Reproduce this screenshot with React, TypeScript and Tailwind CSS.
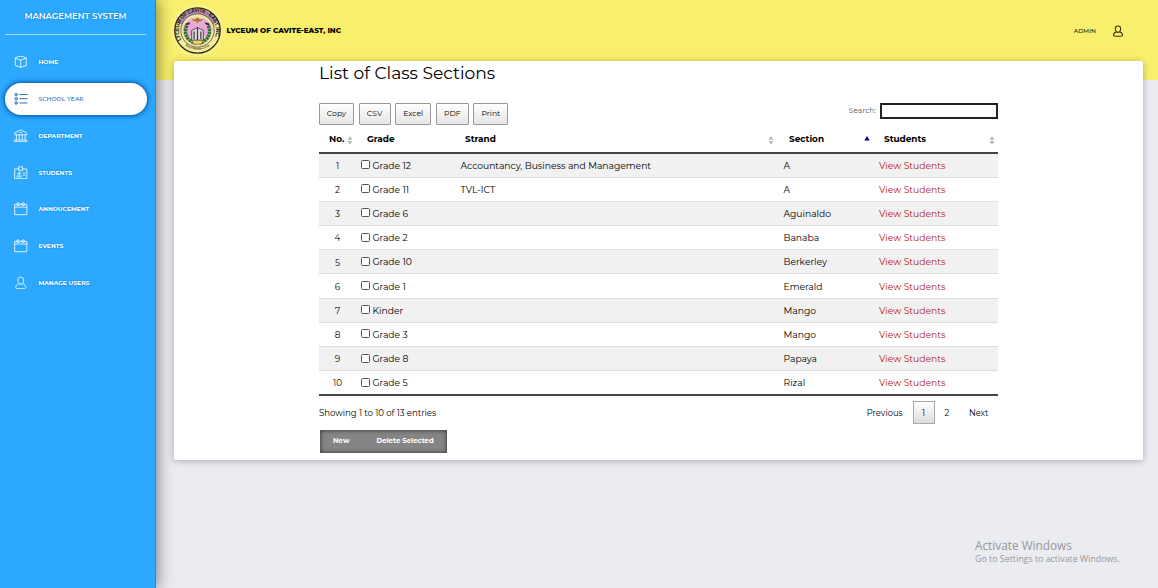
import React from "react";

type IconName = "box" | "list" | "bank" | "badge" | "calendar" | "user";

function NavIcon({ name, className }: { name: IconName; className?: string }) {
  return (
    <svg viewBox="0 0 16 16" fill="none" stroke="currentColor" strokeWidth="1.15" strokeLinejoin="round" strokeLinecap="round" className={className}>
      {name === "box" && <path d="M1.500 3.800 8 6 14.500 3.800M8 6V14.500M1.500 3.800V12.500L8 14.500 14.500 12.500V3.800L11 2 8 1.500 5 2Z" />}
      {name === "list" && (
        <>
          <path d="M7 3H15.500M7 8H15.500M7 13H15.500" />
          <circle cx="2.500" cy="3" r="1.500" /><circle cx="2.500" cy="8" r="1.500" /><circle cx="2.500" cy="13" r="1.500" />
        </>
      )}
      {name === "bank" && <path d="M1 6.500V4.500L8 1 15 4.500V6.500ZM2.800 6.500V13M6.200 6.500V13M9.800 6.500V13M13.200 6.500V13M1 13H15V15H1ZM7 4.200H9" />}
      {name === "badge" && (
        <>
          <path d="M6 3.500H.8V15H15.200V3.500H10M6 1H10V5.500H6ZM11 8.500H13M11 11H13M3.500 12.500C3.500 10.800 4.500 10.500 6 10.500S8.500 10.800 8.500 12.500Z" />
          <circle cx="6" cy="8.600" r="1.200" />
        </>
      )}
      {name === "calendar" && <path d="M4 2.800H.8V15H15.200V2.800H12M6 2.800H10M.8 6H15.200M4 1.200H6V4H4ZM10 1.200H12V4H10Z" />}
      {name === "user" && (
        <>
          <path d="M5.800 9.300C3.200 9.800 2 11.500 2 13.500C2 14.500 3 15 8 15S14 14.500 14 13.500C14 11.500 12.800 9.800 10.200 9.300" />
          <path d="M8 9.800C6 9.800 4.500 7.500 4.500 4.700A3.500 3.500 0 0 1 11.500 4.700C11.500 7.500 10 9.800 8 9.800Z" />
        </>
      )}
    </svg>
  );
}

const navItems: { label: string; icon: IconName; active?: boolean }[] = [
  { label: "HOME", icon: "box" },
  { label: "SCHOOL YEAR", icon: "list", active: true },
  { label: "DEPARTMENT", icon: "bank" },
  { label: "STUDENTS", icon: "badge" },
  { label: "ANNOUCEMENT", icon: "calendar" },
  { label: "EVENTS", icon: "calendar" },
  { label: "MANAGE USERS", icon: "user" },
];

const rows = [
  ["Grade 12", "Accountancy, Business and Management", "A"],
  ["Grade 11", "TVL-ICT", "A"],
  ["Grade 6", "", "Aguinaldo"],
  ["Grade 2", "", "Banaba"],
  ["Grade 10", "", "Berkerley"],
  ["Grade 1", "", "Emerald"],
  ["Kinder", "", "Mango"],
  ["Grade 3", "", "Mango"],
  ["Grade 8", "", "Papaya"],
  ["Grade 5", "", "Rizal"],
];

const exportButtons = [
  { label: "Copy", width: "w-[35px]" },
  { label: "CSV", width: "w-[32px]" },
  { label: "Excel", width: "w-[36px]" },
  { label: "PDF", width: "w-[33px]" },
  { label: "Print", width: "w-[35px]" },
];

function SortIcon({ sorted = false }: { sorted?: boolean }) {
  return (
    <svg viewBox="0 0 6 10" className="relative top-px h-[10px] w-[6px] shrink-0">
      {sorted ? <path d="M3 1 5.700 5.500H.3Z" fill="#000080" /> : <path d="M3 1 5.300 4.700H.7ZM3 9.800 5.300 6H.7Z" fill="#b5b5b5" />}
    </svg>
  );
}

function Seal() {
  return (
    <svg viewBox="0 0 48 48" className="size-[47px] shrink-0">
      <defs>
        <path id="seal-top" d="M7.500 33.500A19 19 0 1 1 40.500 33.500" />
        <path id="seal-bottom" d="M10.500 38.500A20.300 20.300 0 0 0 37.500 38.500" />
      </defs>
      <circle cx="24" cy="24" r="23.200" fill="#f4ec9c" stroke="#29271a" strokeWidth="1.300" />
      <path d="M3.500 15A22.500 22.500 0 0 1 44.500 15L39 19A17 17 0 0 0 9 19Z" fill="#b58cb0" />
      <circle cx="24" cy="24" r="17" fill="#f0e9a8" stroke="#39312b" strokeWidth=".7" />
      <path d="M9 22A15.500 15.500 0 0 1 39 22L35 30H13Z" fill="#eaa8d6" />
      <text fontSize="5.400" fontWeight="700" fill="#1c1518" fontFamily="Liberation Sans, sans-serif"><textPath href="#seal-top" textLength="76">LYCEUM OF CAVITE - EAST, INC.</textPath></text>
      <text fontSize="3.200" fontWeight="700" fill="#292513" fontFamily="Liberation Serif, serif"><textPath href="#seal-bottom" startOffset="1">Trece Martires City</textPath></text>
      <path d="M16.500 11 21 12.500 24 10.500 27 12.500 31.500 11 28 15 25.500 15 24 18 22.500 15 20 15Z" fill="#b06c34" stroke="#f8e2c0" strokeWidth=".7" />
      <path d="M13 19C9.500 27 13 34 22 37M35 19C38.500 27 35 34 26 37" fill="none" stroke="#35703c" strokeWidth="3.600" strokeDasharray="2.500 .6" />
      <path d="M12 18 16 16.500M36 18 32 16.500" stroke="#302a25" strokeWidth="2" />
      <path d="M18 24 24 21 30 24V34H18Z" fill="#ded9df" stroke="#353136" strokeWidth=".8" />
      <path d="M24 21V34M20.500 25V33M27.500 25V33" stroke="#39353a" strokeWidth="1.200" />
      <path d="M18 34H30L28 38H20Z" fill="#ead574" stroke="#64552c" strokeWidth=".7" />
    </svg>
  );
}

export default function App() {
  return (
    <div className="flex h-[588px] w-[1158px] overflow-hidden bg-[#ebecf1] font-['Montserrat','Inter',sans-serif] text-black">
      <aside className="relative z-10 w-[156px] shrink-0 border-r border-[#188ddd] bg-[#2ca8ff] text-white shadow-[2px_0_14px_rgba(0,0,0,0.45)]">
        <h1 className="ml-[5px] flex h-[35px] w-[141px] items-center justify-center border-b border-[#a6dafb] pb-[1.500px] text-[8.450px] font-semibold [text-shadow:0_0_2px_#0876c4]">MANAGEMENT SYSTEM</h1>
        <nav className="ml-[5px] mt-[11px] flex w-[142px] flex-col gap-[5px]">
          {navItems.map((item) => (
            <a key={item.label} href="#" className={`flex h-[31.800px] items-center rounded-full pl-[9px] ${item.active ? "bg-white text-[#2168b8] shadow-[0_0_5px_1px_#00529f]" : "text-white"}`}>
              <NavIcon name={item.icon} className={`size-[13.500px] shrink-0 ${item.active ? "" : "opacity-85"}`} />
              <span className={`ml-[11px] whitespace-nowrap pt-[0.500px] text-[6px] leading-[8px] ${item.active ? "font-medium tracking-[0.05px]" : "font-bold [text-shadow:0_0_2px_#087bcb]"}`}>{item.label}</span>
            </a>
          ))}
        </nav>
      </aside>

      <div className="relative flex min-w-0 grow flex-col bg-[linear-gradient(#f8ef6d_0_80px,#ebecf1_80px)]">
        <header className="flex h-[61px] shrink-0 items-center pl-[18px] pr-[34px]">
          <div className="rounded-full shadow-[0_0_5px_#fffbc0]"><Seal /></div>
          <span className="ml-[5.500px] pt-[1.500px] text-[7.250px] font-extrabold">LYCEUM OF CAVITE-EAST, INC</span>
          <span className="ml-auto pt-[1.500px] text-[6.100px] font-medium text-[#302d0d]">ADMIN</span>
          <NavIcon name="user" className="ml-[16px] size-[12px] stroke-[1.4] text-[#383409]" />
        </header>

        <main className="ml-[18px] h-[399px] w-[969px] shrink-0 rounded-[2px] bg-white pl-[145px] shadow-[0_1px_7px_rgba(0,0,0,0.28)]">
          <div className="w-[679px]">
            <h2 className="h-[42px] text-[17.100px] leading-[24px]">List of Class Sections</h2>
            <div className="flex h-[23px] items-start">
              <div className="flex gap-[4.600px]">
                {exportButtons.map((button) => (
                  <button key={button.label} className={`${button.width} h-[22px] rounded-[1px] border border-[#999] bg-linear-to-b from-white to-[#e5e5e5] text-[7.700px]`}>{button.label}</button>
                ))}
              </div>
              <label className="ml-auto flex items-center gap-[4px] text-[7.500px] text-[#555]">Search: <input aria-label="Search" className="h-[16px] w-[118px] border-2 border-[#222] bg-white" /></label>
            </div>
            <table className="w-full table-fixed border-collapse">
              <colgroup><col className="w-[37px]" /><col className="w-[98px]" /><col className="w-[324px]" /><col className="w-[95px]" /><col className="w-[125px]" /></colgroup>
              <thead>
                <tr className="h-[27px] border-b-2 border-[#444] text-left text-[8.900px] font-bold">
                  <th><div className="flex items-center gap-[3px] pl-[10px]">No. <SortIcon /></div></th>
                  <th className="pl-[11px]">Grade</th>
                  <th className="pl-[11px]"><div className="flex items-center justify-between pr-[4px]">Strand <SortIcon /></div></th>
                  <th className="pl-[11px]"><div className="flex items-center justify-between pr-[3px]">Section <SortIcon sorted /></div></th>
                  <th className="pl-[11px]"><div className="flex items-center justify-between pr-[3px]">Students <SortIcon /></div></th>
                </tr>
              </thead>
              <tbody className="border-b-2 border-[#444] text-[9.200px]">
                {rows.map((row, index) => (
                  <tr key={index} className="h-[24.200px] border-b border-[#ddd] odd:bg-[#f1f1f1]">
                    <td className="pt-[0.500px] text-center text-[8.800px]">{index + 1}</td>
                    <td className="pl-[5px] pt-[1px]"><label className="flex items-center gap-[2.500px]"><input type="checkbox" className="mb-[2px] size-[9px] appearance-none rounded-[1.500px] border border-[#555] bg-white" />{row[0]}</label></td>
                    <td className="whitespace-nowrap pl-[6.500px] pt-[1px]">{row[1]}</td>
                    <td className="pl-[5.500px] pt-[1px]">{row[2]}</td>
                    <td className="pl-[6px] pt-[1px]"><a href="#" className="text-[#b3241a]">View Students</a></td>
                  </tr>
                ))}
              </tbody>
            </table>
            <div className="flex h-[34px] items-center text-[8.400px]">
              <span className="pt-[1px] text-[8.550px]">Showing 1 to 10 of 13 entries</span>
              <div className="ml-auto flex items-center pr-[9.500px]">
                <span>Previous</span>
                <button className="ml-[10px] h-[23px] w-[22px] border border-[#aaa] bg-linear-to-b from-white to-[#dcdcdc]">1</button>
                <span className="ml-[10px]">2</span><span className="ml-[19.500px]">Next</span>
              </div>
            </div>
            <div className="ml-[1px] flex h-[23px] w-[127px] items-center rounded-[1px] bg-[#858585] text-[6.950px] font-bold text-white shadow-[inset_0_0_4px_#222]">
              <button className="ml-[13px]">New</button><button className="ml-[27px] whitespace-nowrap">Delete Selected</button>
            </div>
          </div>
        </main>
        <div className="ml-auto mt-[77px] mr-[37px] w-[146px] font-['Open_Sans',sans-serif] text-[#96979b]">
          <div className="text-[11.800px] leading-[16px]">Activate Windows</div>
          <div className="whitespace-nowrap text-[8.850px] leading-[13px]">Go to Settings to activate Windows.</div>
        </div>
      </div>
    </div>
  );
}
